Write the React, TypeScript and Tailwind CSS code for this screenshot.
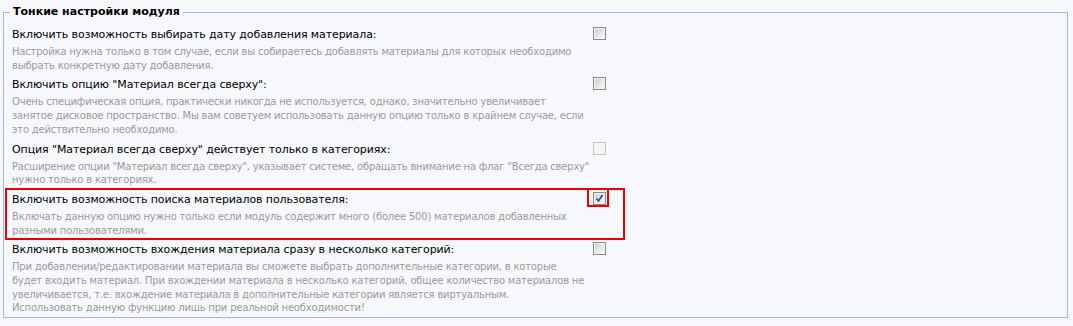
import React from 'react';

type Option = {
  title: string;
  desc: string[];
  checked?: boolean;
  disabled?: boolean;
  highlight?: boolean;
};

const options: Option[] = [
  {
    title: 'Включить возможность выбирать дату добавления материала:',
    desc: [
      'Настройка нужна только в том случае, если вы собираетесь добавлять материалы для которых необходимо',
      'выбрать конкретную дату добавления.',
    ],
  },
  {
    title: 'Включить опцию "Материал всегда сверху":',
    desc: [
      'Очень специфическая опция, практически никогда не используется, однако, значительно увеличивает',
      'занятое дисковое пространство. Мы вам советуем использовать данную опцию только в крайнем случае, если',
      'это действительно необходимо.',
    ],
  },
  {
    title: 'Опция "Материал всегда сверху" действует только в категориях:',
    desc: [
      'Расширение опции "Материал всегда сверху", указывает системе, обращать внимание на флаг "Всегда сверху"',
      'нужно только в категориях.',
    ],
    disabled: true,
  },
  {
    title: 'Включить возможность поиска материалов пользователя:',
    desc: [
      'Включать данную опцию нужно только если модуль содержит много (более 500) материалов добавленных',
      'разными пользователями.',
    ],
    checked: true,
    highlight: true,
  },
  {
    title: 'Включить возможность вхождения материала сразу в несколько категорий:',
    desc: [
      'При добавлении/редактировании материала вы сможете выбрать дополнительные категории, в которые',
      'будет входить материал. При вхождении материала в несколько категорий, общее количество материалов не',
      'увеличивается, т.е. вхождение материала в дополнительные категории является виртуальным.',
      'Использовать данную функцию лишь при реальной необходимости!',
    ],
  },
];

function Checkbox({ checked, disabled }: { checked?: boolean; disabled?: boolean }) {
  return (
    <span
      className={`flex h-[13px] w-[13px] items-center justify-center border ${
        disabled ? 'border-[#c4c4c4] bg-[#f4f4f4]' : 'border-[#8a8a8a] bg-[#f2f2f2]'
      }`}
    >
      <span
        className={`h-[9px] w-[9px] ${disabled ? 'bg-[#f4f4f4]' : 'bg-gradient-to-br from-[#cfd0d4] to-[#f9f9f9]'}`}
      >
        {checked && (
          <svg viewBox="0 0 9 9" className="h-[9px] w-[9px]">
            <path d="M1.5 4.5 L3.5 7 L7.5 1" fill="none" stroke="#21419a" strokeWidth="1.6" />
          </svg>
        )}
      </span>
    </span>
  );
}

export default function App() {
  return (
    <div className="h-[326px] w-[1073px] bg-[#f7f8fc] pl-[3px] pr-[5px] pt-[3px] font-['DejaVu_Sans',sans-serif]">
      <fieldset className="h-[315px] border border-[#a3b6e3] pl-[1px] pr-2">
        <legend className="ml-[5px] px-[3px] text-[11px] font-bold leading-[18px] text-black">
          Тонкие настройки модуля
        </legend>
        <div className="flex flex-col pt-[2px]">
          {options.map((o, i) => (
            <div
              key={i}
              className={`-mb-[2px] w-[620px] border-2 pb-[1px] pl-[5px] pt-[2px] ${
                o.highlight ? 'border-[#ee0000]' : 'border-transparent'
              }`}
            >
              <div className="flex items-start justify-between pr-[14px]">
                <div className="text-[11px] leading-[16px] tracking-[-0.1px] text-black">{o.title}</div>
                <div
                  className={`-mt-[4px] border-2 pb-0 pl-[4px] pr-[1px] pt-[2px] ${
                    o.highlight ? 'border-[#ee0000]' : 'border-transparent'
                  }`}
                >
                  <Checkbox checked={o.checked} disabled={o.disabled} />
                </div>
              </div>
              <div className="pt-[2px] text-[10px] leading-[13.7px] tracking-[-0.2px] text-[#9a9a9a]">
                {o.desc.map((d, j) => (
                  <div key={j}>{d}</div>
                ))}
              </div>
            </div>
          ))}
        </div>
      </fieldset>
    </div>
  );
}
